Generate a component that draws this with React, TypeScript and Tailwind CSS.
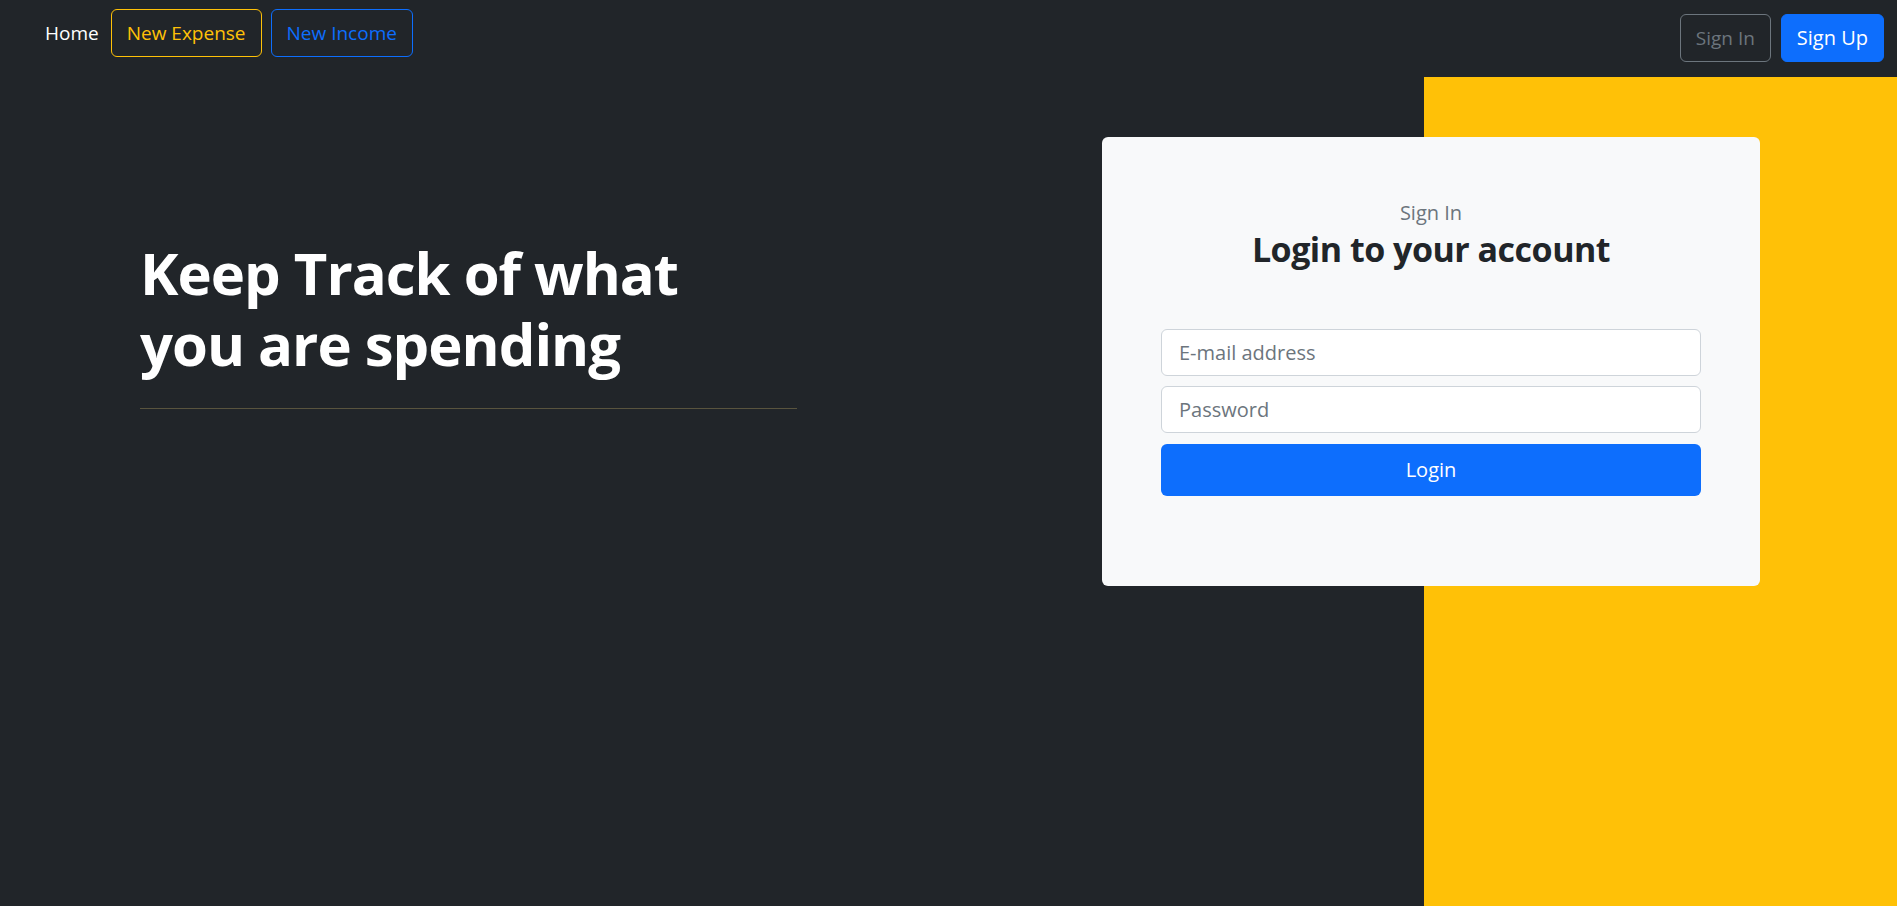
const navBtn = 'h-[48px] px-[15px] rounded-[6px] border text-[19px] leading-[30px] flex items-center';

const NavBar = () => {
  return (
    <nav className="h-[77px] flex justify-between items-start">
      {/* left links */}
      <div className="flex items-center pl-[45px] pt-[9px]">
        <a href="#" className="text-white text-[19px] mr-[12px]">Home</a>
        <button className={`${navBtn} border-[#ffc107] text-[#ffc107] mr-[9px]`}>New Expense</button>
        <button className={`${navBtn} border-[#0d6efd] text-[#0d6efd]`}>New Income</button>
      </div>

      {/* auth buttons */}
      <div className="flex items-center gap-[10px] pt-[14px] pr-[13px]">
        <button className={`${navBtn} border-[#6c757d] text-[#6c757d]`}>Sign In</button>
        <button className={`${navBtn} border-[#0d6efd] bg-[#0d6efd] text-white text-[20px]`}>Sign Up</button>
      </div>
    </nav>
  );
};

const LoginCard = () => {
  return (
    <div className="ml-[-322px] mt-[60px] w-[658px] h-[449px] bg-[#f8f9fa] rounded-[6px] pt-[61px] px-[59px]">
      <p className="text-center text-[20px] leading-[30px] text-[#6c757d]">Sign In</p>
      <h2 className="text-center text-[34px] leading-[43px] font-bold text-[#212529] tracking-[-0.5px]">
        Login to your account
      </h2>

      <form className="mt-[58px] flex flex-col" onSubmit={(e) => e.preventDefault()}>
        <input
          type="email"
          placeholder="E-mail address"
          className="h-[47px] bg-white border border-[#ced4da] rounded-[6px] px-[17px] text-[20px] text-[#212529] placeholder:text-[#6c757d] outline-none"
        />
        <input
          type="password"
          placeholder="Password"
          className="mt-[10px] h-[47px] bg-white border border-[#ced4da] rounded-[6px] px-[17px] text-[20px] text-[#212529] placeholder:text-[#6c757d] outline-none"
        />
        <button type="submit" className="mt-[11px] h-[52px] bg-[#0d6efd] rounded-[6px] text-white text-[20px]">
          Login
        </button>
      </form>
    </div>
  );
};

export default function App() {
  return (
    <div className="min-h-screen h-[906px] bg-[#212529] flex flex-col font-['Open_Sans','Noto_Sans',sans-serif]">
      <NavBar />

      <main className="flex flex-1">
        {/* hero text */}
        <section className="flex-1 pl-[140px] pt-[160px]">
          <h1 className="text-white font-bold text-[58px] leading-[71px] tracking-[-1px]">
            Keep Track of what<br />you are spending
          </h1>
          <hr className="mt-[29px] w-[657px] border-0 border-t border-[#59543e]" />
        </section>

        {/* yellow panel with the card */}
        <section className="w-[473px] bg-[#ffc107]">
          <LoginCard />
        </section>
      </main>
    </div>
  );
}
